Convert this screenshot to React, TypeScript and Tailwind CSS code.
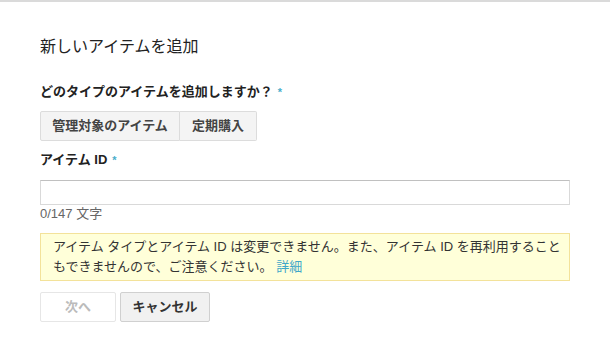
const font = { fontFamily: '"Liberation Sans", "Noto Sans CJK JP", sans-serif' }

function Required() {
  return <span className="ml-[5px] text-[11px] text-[#4aaecb] align-top">*</span>
}

export default function App() {
  return (
    <div style={font} className="w-[610px] h-[352px] bg-white border-t-2 border-[#dadada] text-[#333] overflow-hidden">
      <div className="px-[40px]">
        <h1 className="mt-[33px] text-[16px] leading-[24px] font-normal text-[#222]">新しいアイテムを追加</h1>

        <div className="mt-[24px] text-[13px] leading-[18px] font-bold text-[#222]">
          どのタイプのアイテムを追加しますか？<Required />
        </div>

        <div className="mt-[10px] flex">
          <button className="w-[140px] h-[30px] text-[13px] font-bold text-[#444] bg-[#f4f4f4] border border-[#dcdcdc] rounded-l-[2px]">
            管理対象のアイテム
          </button>
          <button className="w-[77px] h-[30px] text-[13px] font-bold text-[#444] bg-[#f4f4f4] border border-l-0 border-[#dcdcdc] rounded-r-[2px]">
            定期購入
          </button>
        </div>

        <div className="mt-[10px] text-[13px] leading-[18px] font-bold text-[#222]">
          アイテム ID<Required />
        </div>

        <input
          type="text"
          className="mt-[11px] block w-[530px] h-[25px] border border-[#d9d9d9] border-t-[#c0c0c0] outline-none px-2 text-[13px]"
        />
        <div className="text-[13px] leading-[18px] text-[#666]">0/147 文字</div>

        <div className="mt-[10px] w-[530px] border border-[#f3e29a] bg-[#ffffd9] pl-[12px] pr-[4px] py-[3px] text-[13px] leading-[20px] text-[#333] whitespace-nowrap">
          アイテム タイプとアイテム ID は変更できません。また、アイテム ID を再利用すること
          <br />
          もできませんので、ご注意ください。 <a className="text-[#3fa7c9]">詳細</a>
        </div>

        <div className="mt-[11px] flex gap-[4px]">
          <button disabled className="w-[76px] h-[30px] text-[13px] font-bold text-[#bbb] bg-white border border-[#e6e6e6] rounded-[2px]">
            次へ
          </button>
          <button className="w-[90px] h-[30px] text-[13px] font-bold text-[#333] bg-[#f1f1f1] border border-[#d0d0d0] rounded-[2px]">
            キャンセル
          </button>
        </div>
      </div>
    </div>
  )
}
